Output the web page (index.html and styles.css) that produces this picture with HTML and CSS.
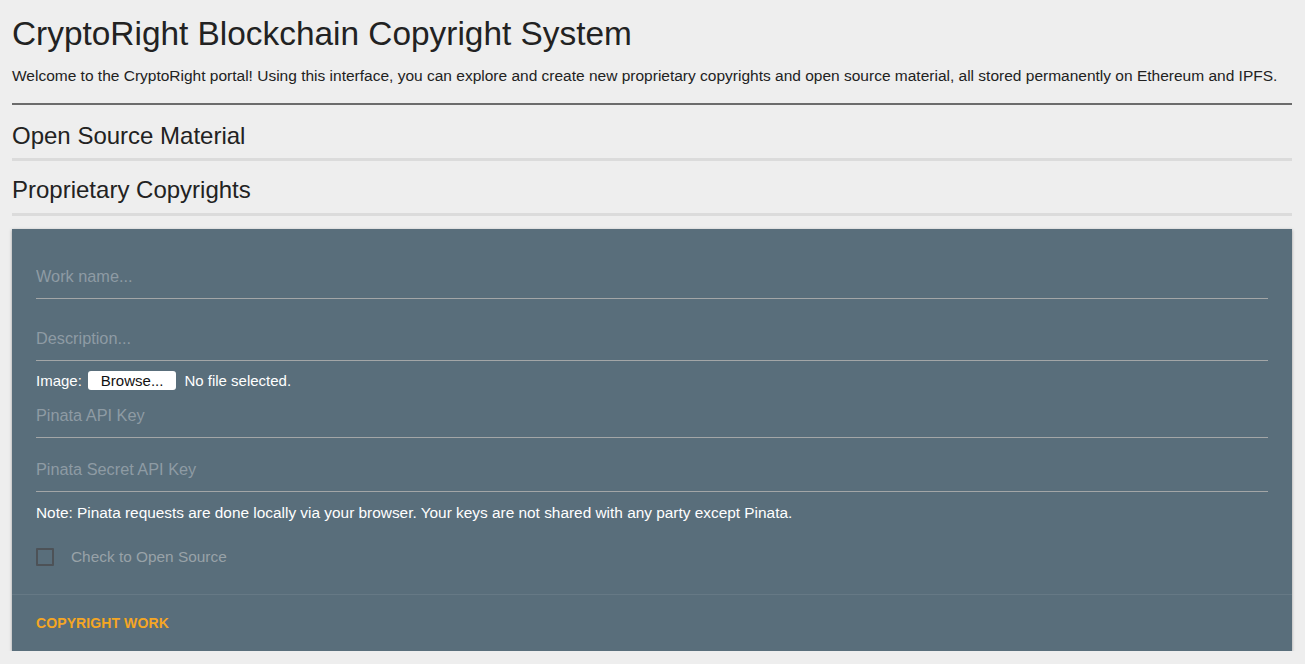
FILE: index.html
```html
<!DOCTYPE html>
<html>
<head>
<meta charset="utf-8">
<link rel="stylesheet" href="styles.css">
</head>
<body>
<h1 class="title">CryptoRight Blockchain Copyright System</h1>
<p class="intro">Welcome to the CryptoRight portal! Using this interface, you can explore and create new proprietary copyrights and open source material, all stored permanently on Ethereum and IPFS.</p>
<hr class="rule">
<section class="panel">
  <h2 class="panel-title">Open Source Material</h2>
</section>
<section class="panel">
  <h2 class="panel-title">Proprietary Copyrights</h2>
</section>
<form class="card">
  <div class="card-body">
    <div class="field"><input class="input" type="text" placeholder="Work name..."></div>
    <div class="field"><input class="input" type="text" placeholder="Description..."></div>
    <div class="file-row">
      <span class="file-label">Image:</span>
      <span class="browse">Browse...</span>
      <span class="file-status">No file selected.</span>
    </div>
    <div class="field small"><input class="input" type="text" placeholder="Pinata API Key"></div>
    <div class="field small"><input class="input" type="text" placeholder="Pinata Secret API Key"></div>
    <p class="note">Note: Pinata requests are done locally via your browser. Your keys are not shared with any party except Pinata.</p>
    <label class="check-row"><span class="box"></span><span class="check-label">Check to Open Source</span></label>
  </div>
  <div class="card-actions">
    <span class="action">COPYRIGHT WORK</span>
  </div>
</form>
</body>
</html>
```
FILE: styles.css
```css
html, body { margin: 0; padding: 0; }
body {
  background: #eeeeee;
  padding: 0 13px 0 12px;
  font-family: "Liberation Sans", Arial, sans-serif;
  color: #222;
}
.title {
  margin: 0;
  padding-top: 15px;
  font-size: 33.4px;
  line-height: 38px;
  font-weight: 400;
  color: #222;
}
.intro {
  margin: 13px 0 0;
  font-size: 15.5px;
  line-height: 20px;
  color: #222;
}
.rule {
  margin: 17px 0 1px;
  border: 0;
  height: 2px;
  background: #6b6b6b;
}
.panel {
  padding-top: 16px;
  height: 36px;
  border-bottom: 3px solid #dbdbdb;
}
.panel + .panel { padding-top: 15px; height: 37px; }
.panel-title {
  margin: 0;
  font-size: 24px;
  line-height: 28px;
  font-weight: 400;
  color: #222;
}
.card {
  margin-top: 13px;
  background: #596e7b;
  box-shadow: 0 1px 3px rgba(0,0,0,0.35);
  display: flex;
  flex-direction: column;
}
.card-body {
  padding: 20px 24px 28px;
  display: flex;
  flex-direction: column;
}
.field {
  height: 49px;
  display: flex;
  align-items: flex-end;
  margin-top: 12px;
  border-bottom: 1px solid #a3a6a7;
}
.field:first-child { margin-top: 0; }
.field.small { height: 43px; margin-top: 4px; }
.field.small + .field.small { margin-top: 10px; }
.input {
  width: 100%;
  background: transparent;
  border: 0;
  outline: none;
  padding: 0 0 12px;
  font-family: inherit;
  font-size: 16.3px;
  color: #fff;
}
.input::placeholder { color: #8e9ba4; }
.file-row {
  display: flex;
  align-items: center;
  gap: 6px;
  margin-top: 10px;
  font-size: 15px;
  color: #fff;
}
.browse {
  background: #fff;
  color: #111;
  border-radius: 3px;
  padding: 1px 13px;
  font-size: 15px;
  line-height: 17px;
}
.file-status { margin-left: 2px; }
.note {
  margin: 12px 0 0;
  font-size: 15.4px;
  line-height: 18px;
  color: #fff;
}
.check-row {
  margin-top: 26px;
  display: flex;
  align-items: center;
  gap: 17px;
}
.box {
  width: 14px;
  height: 14px;
  border: 2px solid #4d5257;
  border-radius: 1px;
}
.check-label {
  font-size: 15.4px;
  color: #98a2a8;
}
.card-actions {
  border-top: 1px solid #667985;
  padding: 19px 24px 19px;
}
.action {
  font-size: 14px;
  font-weight: 700;
  color: #f5a623;
  letter-spacing: 0.1px;
}
```
